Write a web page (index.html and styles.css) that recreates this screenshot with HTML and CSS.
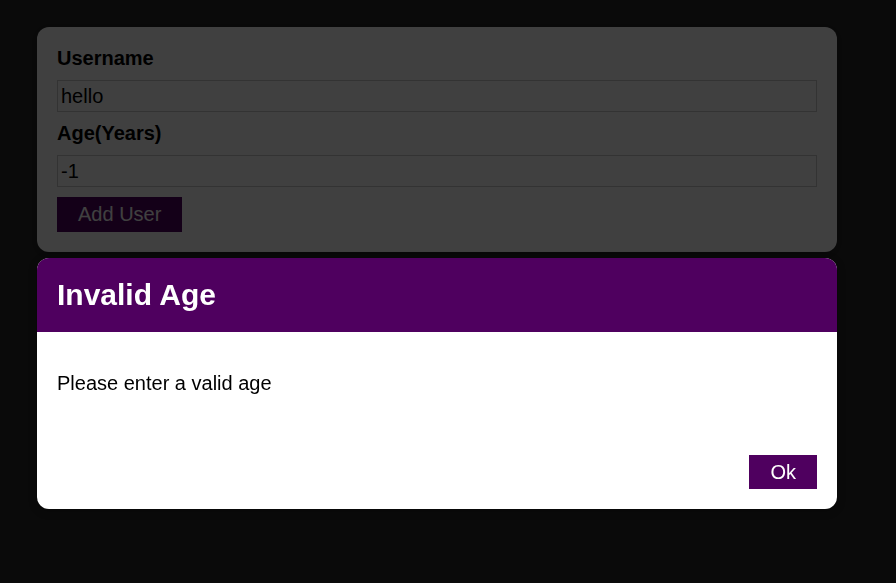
FILE: index.html
```html
<!DOCTYPE html>
<html lang="en">
<head>
<meta charset="utf-8">
<title>Add User</title>
<link rel="stylesheet" href="styles.css">
</head>
<body>
<div class="page">
  <form class="card input-card">
    <label class="field-label" for="username">Username</label>
    <input class="field-input" id="username" type="text" value="hello">
    <label class="field-label" for="age">Age(Years)</label>
    <input class="field-input" id="age" type="number" value="-1">
    <button class="btn" type="button">Add User</button>
  </form>
</div>
<div class="backdrop"></div>
<div class="card modal">
  <header class="modal-header">
    <h2 class="modal-title">Invalid Age</h2>
  </header>
  <div class="modal-content">
    <p class="modal-text">Please enter a valid age</p>
  </div>
  <footer class="modal-actions">
    <button class="btn" type="button">Ok</button>
  </footer>
</div>
</body>
</html>
```

FILE: styles.css
```css
* {
  box-sizing: border-box;
}

html, body {
  margin: 0;
  height: 100%;
}

body {
  background: #292929;
  font-family: "Liberation Sans", Arial, sans-serif;
  font-size: 20px;
  overflow: hidden;
}

.page {
  padding: 27px 0 0 37px;
}

.card {
  background: #ffffff;
  border-radius: 12px;
  box-shadow: 0 2px 8px rgba(0, 0, 0, 0.26);
}

.input-card {
  width: 800px;
  padding: 20px;
  display: flex;
  flex-direction: column;
  align-items: flex-start;
}

.field-label {
  display: block;
  font-weight: bold;
  line-height: 23px;
  margin-bottom: 10px;
}

.field-input {
  display: block;
  width: 100%;
  font: inherit;
  line-height: 24px;
  height: 32px;
  padding: 3px;
  border: 1px solid #cccccc;
  margin: 0 0 10px 0;
  color: #000;
  background: #fff;
  -moz-appearance: textfield;
}

.field-input::-webkit-outer-spin-button,
.field-input::-webkit-inner-spin-button {
  -webkit-appearance: none;
  margin: 0;
}

.btn {
  font: inherit;
  line-height: 23px;
  border: 1px solid #4f005f;
  background: #4f005f;
  color: #ffffff;
  padding: 5px 20px;
  height: 35px;
  cursor: pointer;
  margin: 0;
}

.backdrop {
  position: fixed;
  inset: 0;
  background: rgba(0, 0, 0, 0.75);
  z-index: 10;
}

.modal {
  position: absolute;
  top: 258px;
  left: 37px;
  width: 800px;
  overflow: hidden;
  z-index: 100;
}

.modal-header {
  background: #4f005f;
  padding: 20px;
}

.modal-title {
  margin: 0;
  color: #ffffff;
  font-size: 30px;
  line-height: 34px;
  font-weight: bold;
}

.modal-content {
  padding: 20px;
}

.modal-text {
  margin: 20px 0;
  line-height: 23px;
  color: #000;
}

.modal-actions {
  padding: 20px;
  display: flex;
  justify-content: flex-end;
}

.modal-actions .btn {
  height: 34px;
  line-height: 22px;
}
```
